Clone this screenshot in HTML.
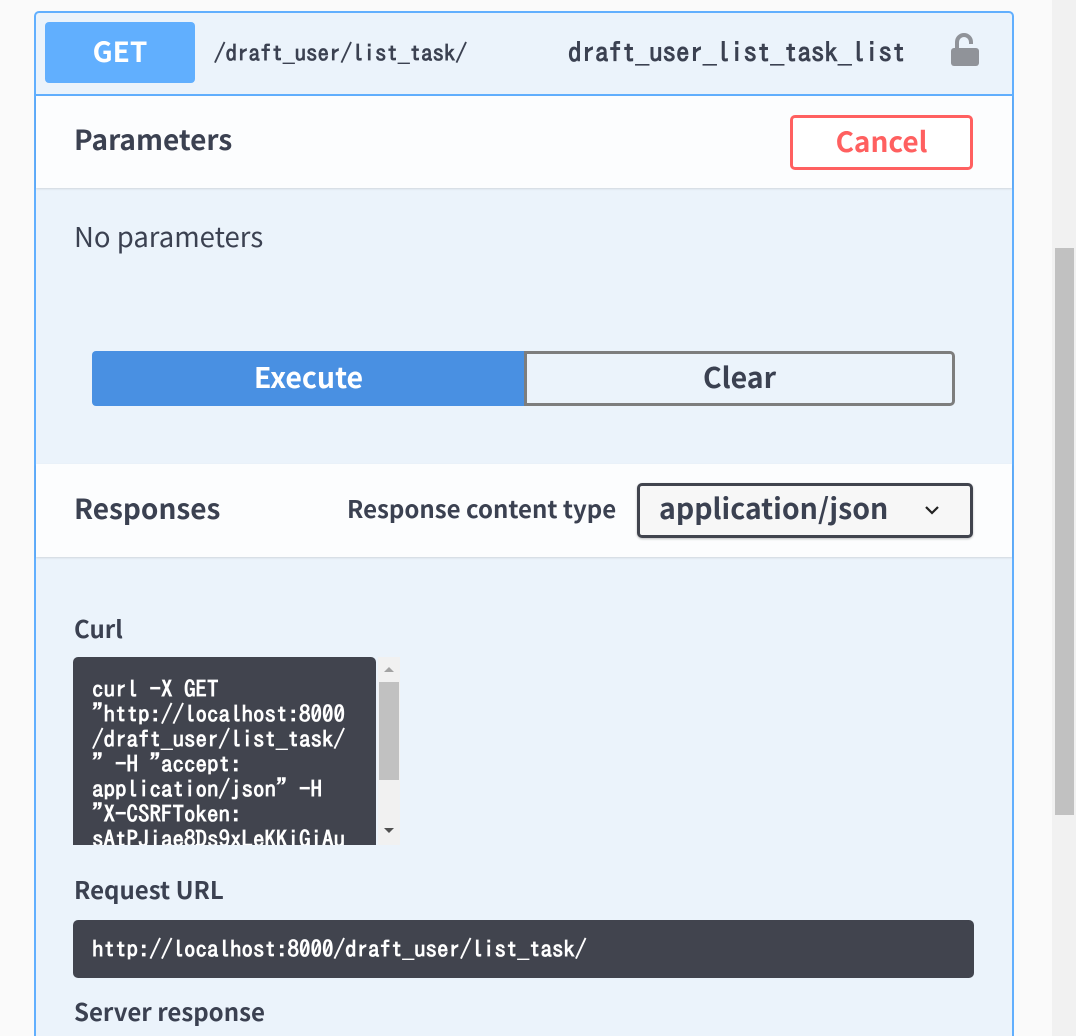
<!DOCTYPE html>
<html style="overflow:hidden;height:1036px"><head><meta charset="utf-8"><style>
*{margin:0;padding:0;box-sizing:border-box}
body{width:1076px;height:1036px;background:#fafafa;position:relative;overflow:hidden;font-family:"Noto Sans CJK JP","Liberation Sans",sans-serif;color:#3b4151}
.a{position:absolute}
.mono{font-family:"IPAGothic","Liberation Mono",monospace}
.lbl{font-weight:bold;line-height:1}
</style></head><body>
<div class="a" style="left:1052px;top:0;width:24px;height:1036px;background:#f1f1f1"></div>
<div class="a" style="left:1055px;top:248px;width:19px;height:567px;background:#c1c1c1"></div>

<div class="a" style="left:34px;top:11px;width:980px;height:1040px;border:2px solid #61affe;border-radius:5px;background:#ebf3fb;overflow:hidden">
</div>
<div class="a" style="left:35px;top:94px;width:978px;height:2px;background:#61affe"></div>
<div class="a" style="left:45px;top:22px;width:150px;height:61px;background:#61affe;border-radius:4px;color:#fff;font-weight:bold;font-size:28px;line-height:59px;text-align:center">GET</div>
<div class="a mono" style="left:214px;top:40px;font-size:23px;line-height:26px;color:#3b4151;font-weight:bold">/draft_user/list_task/</div>
<div class="a mono" style="left:568px;top:38px;font-size:27px;line-height:30px;color:#3b4151;font-weight:bold">draft_user_list_task_list</div>
<svg class="a" style="left:950px;top:32px" width="30" height="36" viewBox="0 0 30 36">
<path d="M7 16 V10 a7 7 0 0 1 14 0 V12" fill="none" stroke="#909399" stroke-width="4"/>
<rect x="1" y="16" width="28" height="18" rx="3" fill="#909399"/></svg>

<div class="a" style="left:36px;top:96px;width:976px;height:92px;background:#fcfdfe;box-shadow:0 1px 2px rgba(0,0,0,.12)"></div>
<div class="a lbl" style="left:74px;top:125px;font-size:28px">Parameters</div>
<div class="a" style="left:790px;top:115px;width:183px;height:55px;border:3px solid #ff6060;border-radius:5px;color:#ff6060;font-weight:bold;font-size:28px;line-height:46px;text-align:center;background:#fff">Cancel</div>
<div class="a" style="left:74px;top:220px;font-size:27.5px;line-height:30px">No parameters</div>

<div class="a" style="left:92px;top:351px;width:433px;height:55px;background:#4990e2;border-radius:4px 0 0 4px;color:#fff;font-weight:bold;font-size:28.5px;line-height:52px;text-align:center">Execute</div>
<div class="a" style="left:524px;top:351px;width:431px;height:55px;border:3px solid #7d7d7d;border-radius:0 5px 5px 0;color:#3b4151;font-weight:bold;font-size:28.5px;line-height:46px;text-align:center">Clear</div>

<div class="a" style="left:36px;top:464px;width:976px;height:93px;background:#fcfdfe;box-shadow:0 1px 2px rgba(0,0,0,.12)"></div>
<div class="a lbl" style="left:74px;top:494px;font-size:28px">Responses</div>
<div class="a lbl" style="left:347px;top:496px;font-size:24px">Response content type</div>
<div class="a" style="left:637px;top:483px;width:336px;height:55px;border:3px solid #41444e;border-radius:5px;background:#f7f7f7;box-shadow:0 1px 2px rgba(0,0,0,.25)"></div>
<div class="a lbl" style="left:659px;top:494px;font-size:28.5px">application/json</div>
<svg class="a" style="left:924px;top:504px" width="16" height="12" viewBox="0 0 16 12"><path d="M2 3 L8 9 L14 3" fill="none" stroke="#222" stroke-width="2.2"/></svg>

<div class="a lbl" style="left:74px;top:616px;font-size:24px">Curl</div>
<div class="a" style="left:73px;top:657px;width:303px;height:188px;background:#41444e;border-radius:5px 5px 0 0;overflow:hidden">
<div class="mono" style="position:absolute;left:19px;top:19px;color:#fff;font-weight:bold;font-size:23px;line-height:25px;white-space:pre">curl -X GET
"http://localhost:8000
/draft_user/list_task/
" -H "accept:
application/json" -H
"X-CSRFToken:
sAtPJiae8Ds9xLeKKiGiAu</div></div>
<div class="a" style="left:378px;top:657px;width:22px;height:188px;background:#f1f1f1"></div>
<div class="a" style="left:379px;top:682px;width:20px;height:98px;background:#c1c1c1"></div>
<svg class="a" style="left:382px;top:664px" width="14" height="10"><path d="M2 8 L7 3 L12 8Z" fill="#a3a3a3"/></svg>
<svg class="a" style="left:382px;top:826px" width="14" height="10"><path d="M2 2 L7 7 L12 2Z" fill="#505050"/></svg>

<div class="a lbl" style="left:74px;top:877px;font-size:24px">Request URL</div>
<div class="a" style="left:73px;top:920px;width:901px;height:58px;background:#41444e;border-radius:5px"></div>
<div class="a mono" style="left:92px;top:936px;color:#fff;font-weight:bold;font-size:23px;line-height:26px">http://localhost:8000/draft_user/list_task/</div>
<div class="a lbl" style="left:74px;top:999px;font-size:24px">Server response</div>
</body></html>
